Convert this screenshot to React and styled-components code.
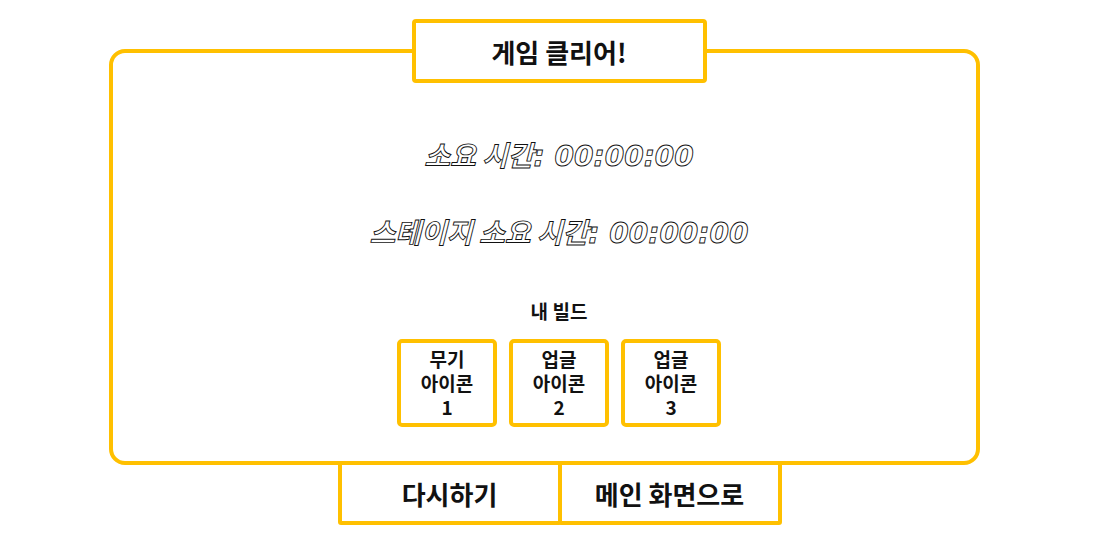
import React from 'react';
import styled, { createGlobalStyle } from 'styled-components';

const Global = createGlobalStyle`
  html, body {
    margin: 0;
    padding: 0;
    background: #fff;
  }
  body {
    font-family: "Noto Sans CJK KR", "Noto Sans", sans-serif;
    color: #111;
  }
`;

const AMBER = '#ffc000';

const Page = styled.div`
  width: 1119px;
  height: 544px;
  padding-top: 19px;
  box-sizing: border-box;
  display: flex;
  flex-direction: column;
`;

const Panel = styled.div`
  box-sizing: border-box;
  margin-left: 109px;
  width: 871px;
  height: 416px;
  margin-top: 30px;
  border: 4px solid ${AMBER};
  border-radius: 16px;
  padding-left: 29px;
  display: flex;
  flex-direction: column;
  align-items: center;
`;

const TitleBox = styled.div`
  box-sizing: border-box;
  width: 295px;
  height: 64px;
  margin-top: -34px;
  background: #fff;
  border: 4px solid ${AMBER};
  border-radius: 4px;
  display: flex;
  align-items: center;
  justify-content: center;
  font-size: 26px;
  font-weight: 700;
`;

const TimeLine = styled.div`
  margin-top: ${(p) => p.$top}px;
  height: 40px;
  line-height: 40px;
  font-family: "DejaVu Sans", "Noto Sans CJK KR", sans-serif;
  font-size: 28px;
  font-weight: 700;
  font-style: italic;
  color: #fff;
  -webkit-text-stroke: 0.9px #111;
  white-space: nowrap;

  .ko {
    font-family: "Noto Sans CJK KR", sans-serif;
  }
`;

const BuildLabel = styled.div`
  margin-top: 48px;
  font-size: 19px;
  line-height: 24px;
  font-weight: 700;
`;

const IconRow = styled.div`
  margin-top: 16px;
  display: flex;
  gap: 12px;
`;

const IconSlot = styled.div`
  box-sizing: border-box;
  width: 100px;
  height: 88px;
  border: 4px solid ${AMBER};
  border-radius: 5px;
  display: flex;
  flex-direction: column;
  align-items: center;
  justify-content: center;
  text-align: center;
  font-size: 19px;
  font-weight: 700;
`;

const SlotLine = styled.span`
  display: block;
  height: 24px;
  line-height: 24px;
`;

const ButtonRow = styled.div`
  margin-top: -4px;
  display: flex;
  justify-content: center;
`;

const MenuButton = styled.button`
  box-sizing: border-box;
  width: 224px;
  height: 64px;
  margin: 0;
  margin-left: ${(p) => (p.$joined ? '-4px' : '0')};
  background: #fff;
  border: 4px solid ${AMBER};
  border-radius: 0 0 3px 3px;
  font-family: "Noto Sans CJK KR", sans-serif;
  font-size: 26px;
  font-weight: 700;
  color: #111;
  padding: 0;
  cursor: pointer;
`;

const builds = [
  ['무기', '아이콘', '1'],
  ['업글', '아이콘', '2'],
  ['업글', '아이콘', '3'],
];

export default function App() {
  return (
    <>
      <Global />
      <Page>
        <Panel>
          <TitleBox>게임 클리어!</TitleBox>
          <TimeLine $top={51}>
            <span className="ko">소요 시간</span>: 00:00:00
          </TimeLine>
          <TimeLine $top={37}>
            <span className="ko">스테이지 소요 시간</span>: 00:00:00
          </TimeLine>
          <BuildLabel>내 빌드</BuildLabel>
          <IconRow>
            {builds.map((lines, i) => (
              <IconSlot key={i}>
                {lines.map((t, j) => (
                  <SlotLine key={j}>{t}</SlotLine>
                ))}
              </IconSlot>
            ))}
          </IconRow>
        </Panel>
        <ButtonRow>
          <MenuButton>다시하기</MenuButton>
          <MenuButton $joined>메인 화면으로</MenuButton>
        </ButtonRow>
      </Page>
    </>
  );
}
